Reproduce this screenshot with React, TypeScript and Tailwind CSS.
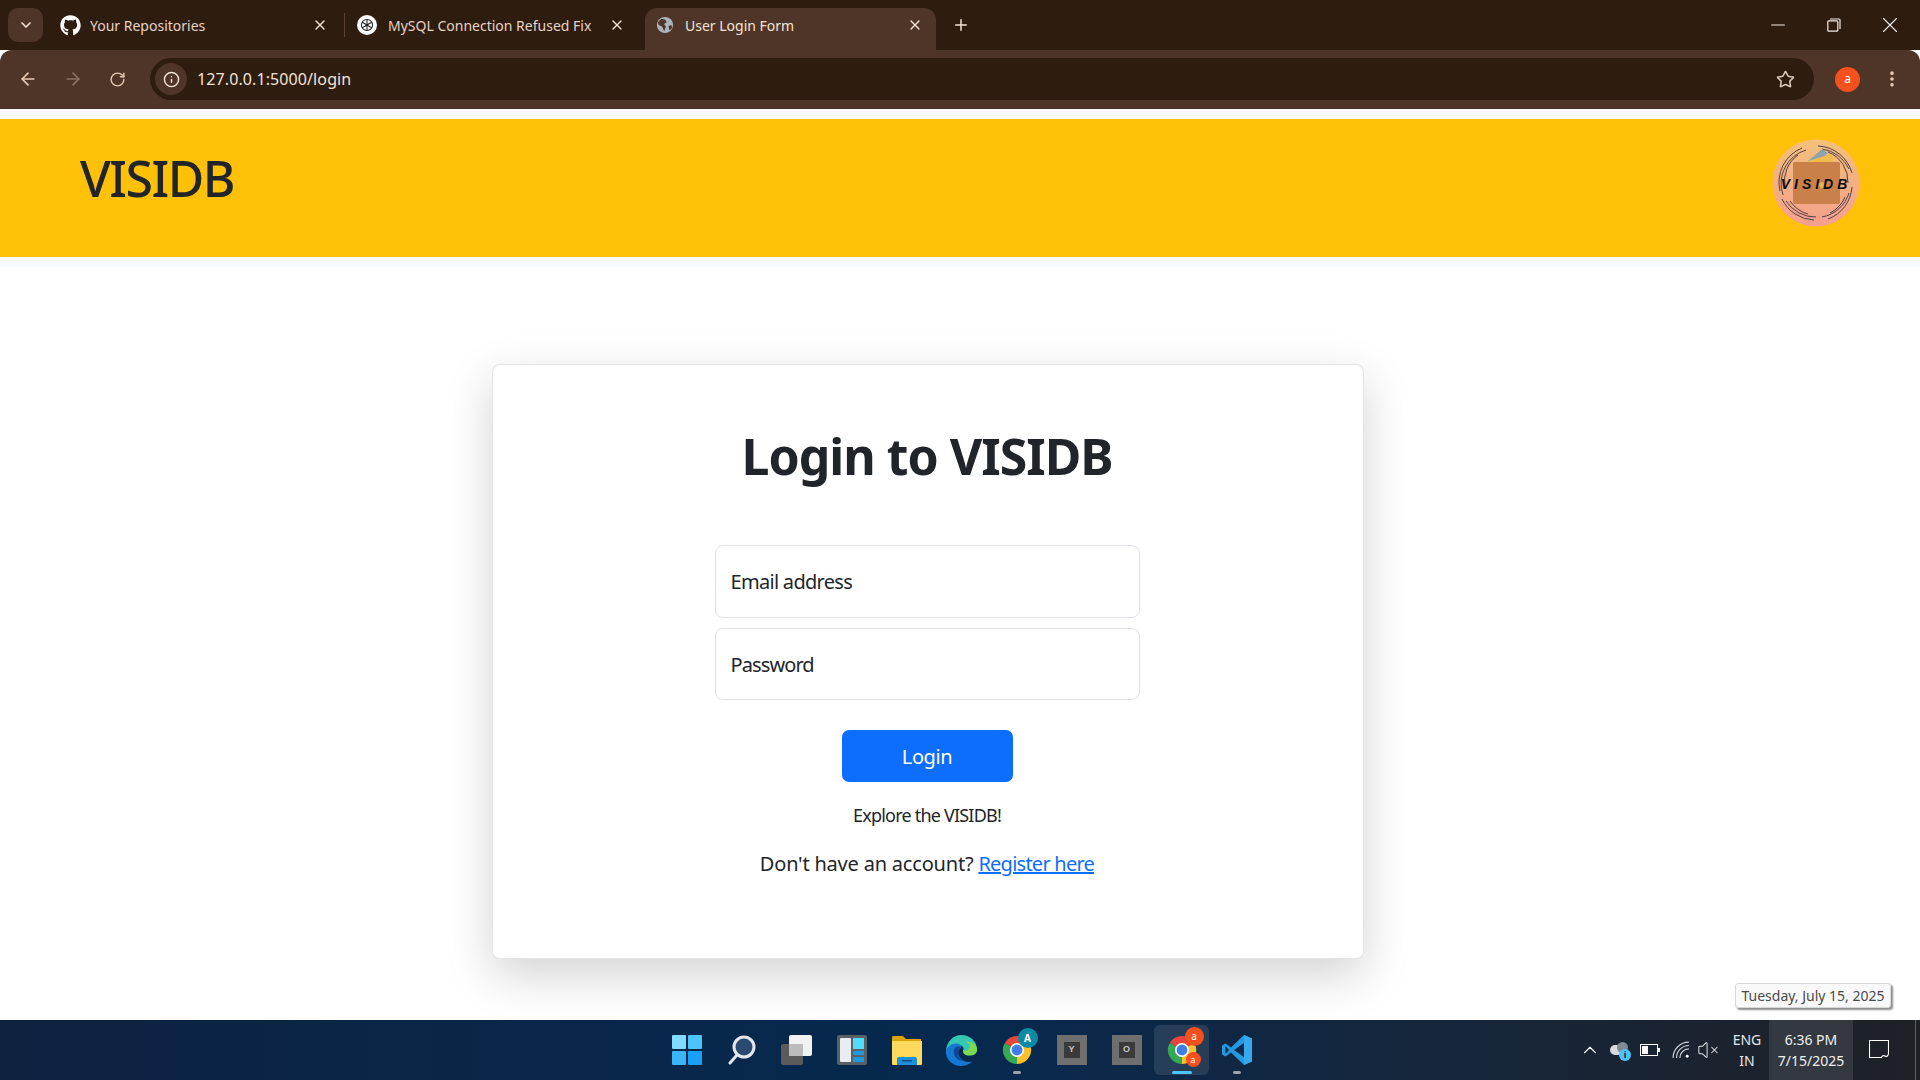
import { ChevronDown, X, ArrowLeft, ArrowRight, RotateCw, Info, Star, EllipsisVertical, Plus, Minus, ChevronUp, VolumeX } from 'lucide-react';
import { FaGithub } from 'react-icons/fa';
import type { ReactNode } from 'react';

const SEGOE = "font-['Noto_Sans',sans-serif]";

function ChromeIcon() {
  return (
    <svg viewBox="0 0 32 32" className="w-[30px] h-[30px]">
      <path d="M16 16L3 8.5A15 15 0 0 1 29 8.5Z" fill="#e8453c" />
      <path d="M16 16L29 8.5A15 15 0 0 1 16 31Z" fill="#fbc02d" />
      <path d="M16 16L16 31A15 15 0 0 1 3 8.5Z" fill="#34a853" />
      <circle cx="16" cy="16" r="7.5" fill="#fff" />
      <circle cx="16" cy="16" r="5.8" fill="#3f7ee8" />
    </svg>
  );
}

function TaskItem({ children, dot, active }: { children: ReactNode; dot?: boolean; active?: boolean }) {
  return (
    <div className={`relative w-[55px] h-[50px] flex items-center justify-center rounded-md ${active ? 'bg-white/10' : ''}`}>
      {children}
      {dot && <span className="absolute bottom-[1px] w-[8px] h-[3px] rounded-full bg-[#9aa3ad]" />}
      {active && <span className="absolute bottom-[1px] w-[20px] h-[3px] rounded-full bg-[#4cc2ff]" />}
    </div>
  );
}

function AppBox({ letter }: { letter: string }) {
  return (
    <div className="w-[30px] h-[30px] bg-[#6f6f6f] flex items-center justify-center">
      <div className="w-[16px] h-[16px] bg-[#3a3a3a] flex items-center justify-center text-[9px] font-bold text-[#c8c8c8] font-['Liberation_Sans',sans-serif]">
        {letter}
      </div>
    </div>
  );
}

function Logo() {
  return (
    <svg viewBox="0 0 88 88" className="w-[88px] h-[88px]">
      <defs>
        <linearGradient id="logoBg" x1="0" y1="0" x2="0" y2="1">
          <stop offset="0" stopColor="#f3c07a" />
          <stop offset="1" stopColor="#f59f8d" />
        </linearGradient>
      </defs>
      <circle cx="44" cy="44" r="43.5" fill="url(#logoBg)" />
      <g fill="none" stroke="#4e4045" strokeWidth="1">
        <path d="M8 52A37 37 0 0 1 30 9" />
        <path d="M11 56A35 35 0 0 1 34 11" />
        <path d="M13 48A32 32 0 0 1 26 16" />
        <path d="M46 7A37 37 0 0 1 80 34" />
        <path d="M50 10A35 35 0 0 1 77 30" />
        <path d="M56 13A32 32 0 0 1 76 44" />
        <path d="M80 48A37 37 0 0 1 56 80" />
        <path d="M77 54A35 35 0 0 1 50 78" />
        <path d="M73 58A32 32 0 0 1 58 74" />
        <path d="M10 60A37 37 0 0 0 42 81" />
        <path d="M14 62A35 35 0 0 0 44 78" />
        <path d="M18 62A32 32 0 0 0 36 75" />
      </g>
      <path d="M36 22L50 10L56 14L46 24Z" fill="#8fa3ad" />
      <path d="M27 25L59 15L62 22L34 27Z" fill="#f2bc4a" />
      <rect x="21" y="23" width="47" height="42" rx="2" fill="#c98149" />
      <circle cx="50" cy="46" r="3" fill="#eeb04a" />
      <text x="44" y="50" textAnchor="middle" fontSize="14" fontWeight="700" fontStyle="italic" letterSpacing="4" fill="#0b0b0b" fontFamily="Liberation Sans, sans-serif">
        VISIDB
      </text>
    </svg>
  );
}

export default function App() {
  return (
    <div className={`w-[1920px] h-[1080px] overflow-hidden flex flex-col bg-white relative ${SEGOE}`}>
      {/* tab strip */}
      <div className="h-[50px] bg-[#2e1c0f] flex items-start pt-[8px] text-[14px] text-[#e7d3c4] shrink-0">
        <div className="ml-[8px] w-[35px] h-[34px] rounded-[10px] bg-[#4f3527] flex items-center justify-center">
          <ChevronDown className="w-4 h-4 text-[#f3e3d6]" strokeWidth={2.5} />
        </div>
        <div className="ml-[17px] w-[284px] h-[34px] flex items-center">
          <FaGithub className="w-[21px] h-[21px] text-white shrink-0" />
          <span className="ml-[9px] flex-1">Your Repositories</span>
          <X className="w-4 h-4 mr-[16px] text-[#f3e3d6]" />
        </div>
        <div className="w-px h-[24px] mt-[5px] bg-[#5b4334]" />
        <div className="ml-[12px] w-[288px] h-[34px] flex items-center">
          <span className="w-[20px] h-[20px] rounded-full bg-white flex items-center justify-center shrink-0">
            <svg viewBox="0 0 20 20" className="w-[16px] h-[16px]" fill="none" stroke="#222" strokeWidth="1.3">
              <circle cx="10" cy="10" r="7" />
              <path d="M10 3v9M4 6.5l8 4.5M4 13.5l8-4.5M10 17V8M16 13.5L8 9M16 6.5L8 11" />
            </svg>
          </span>
          <span className="ml-[11px] flex-1 whitespace-nowrap">MySQL Connection Refused Fix</span>
          <X className="w-4 h-4 mr-[20px] text-[#f3e3d6]" />
        </div>
        <div className="w-[291px] h-[42px] bg-[#4f3527] rounded-t-[12px] flex items-start pt-[7px] pl-[11px] text-[#f3e3d6]">
          <svg viewBox="0 0 20 20" className="w-[18px] h-[18px] mt-[1px] shrink-0">
            <circle cx="10" cy="10" r="9" fill="#aab4bd" />
            <path d="M6 3l4 1 2 3-3 2 2 3-2 5-2-5-4-2-1-3zM14 11l3-1 1 3-3 3z" fill="#4f3527" />
          </svg>
          <span className="ml-[11px] flex-1">User Login Form</span>
          <X className="w-4 h-4 mr-[13px] mt-[2px]" />
        </div>
        <Plus className="ml-[16px] mt-[8px] w-[18px] h-[18px] text-[#f3e3d6]" />
        <div className="ml-auto mr-[2px] flex items-center h-[34px] text-[#f2ece7]">
          <div className="w-[56px] flex justify-center">
            <Minus className="w-[22px] h-[22px]" strokeWidth={1.1} />
          </div>
          <div className="w-[56px] flex justify-center">
            <svg viewBox="0 0 14 14" className="w-[14px] h-[14px]" fill="none" stroke="currentColor" strokeWidth="1.2">
              <rect x="0.8" y="2.8" width="10" height="10.4" rx="1" />
              <path d="M3 1h9a1 1 0 0 1 1 1v9" />
            </svg>
          </div>
          <div className="w-[56px] flex justify-center">
            <X className="w-[26px] h-[26px]" strokeWidth={1} />
          </div>
        </div>
      </div>

      {/* toolbar */}
      <div className="h-[59px] bg-[#4f3527] rounded-t-[12px] flex items-center shrink-0 border-b border-[#463025]">
        <ArrowLeft className="ml-[18px] w-[20px] h-[20px] text-[#e7c8b2]" strokeWidth={2} />
        <ArrowRight className="ml-[25px] w-[20px] h-[20px] text-[#8b7263]" strokeWidth={2} />
        <RotateCw className="ml-[26px] w-[17px] h-[17px] text-[#e7c8b2]" strokeWidth={2} />
        <div className="ml-[24px] w-[1664px] h-[42px] rounded-full bg-[#2e1c0f] flex items-center">
          <div className="ml-[5px] w-[32px] h-[32px] rounded-full bg-[#4f3527] flex items-center justify-center">
            <Info className="w-[17px] h-[17px] text-[#f3e3d6]" />
          </div>
          <span className="ml-[10px] text-[16px] text-[#f3e3d6] tracking-[0.1px]">127.0.0.1:5000/login</span>
          <Star className="ml-auto mr-[19px] w-[19px] h-[19px] text-[#d8c8bc]" strokeWidth={2} />
        </div>
        <div className="ml-[21px] w-[25px] h-[25px] rounded-full bg-[#f4511e] flex items-center justify-center text-[12px] text-white">a</div>
        <EllipsisVertical className="ml-[22px] w-[20px] h-[20px] text-[#e7c8b2]" strokeWidth={2.4} />
      </div>

      {/* page header */}
      <div className="bg-[#f8f9fa] py-[10px] shrink-0">
        <div className="h-[138px] bg-[#ffc107] flex items-start justify-between pl-[80px] pr-[60px]">
          <h2 className="mt-[24px] text-[50px] leading-[70px] font-medium text-[#212529] tracking-[-1.5px]">VISIDB</h2>
          <div className="mt-[20px]">
            <Logo />
          </div>
        </div>
      </div>

      {/* login card */}
      <div className="flex-1 pt-[97px] pl-[492px]">
        <div className="w-[872px] h-[595px] pr-[2px] bg-white border border-black/10 rounded-[8px] shadow-[0_16px_48px_rgba(0,0,0,0.175)] flex flex-col items-center">
          <h1 className="mt-[53px] text-[50px] leading-[76px] font-bold text-[#212529] tracking-[-1px]">Login to VISIDB</h1>
          <input
            placeholder="Email address"
            className="mt-[51px] w-[425px] h-[73px] px-[15px] text-[20px] tracking-[-0.7px] border border-[#dee2e6] rounded-[8px] placeholder:text-[#212529]"
          />
          <input
            placeholder="Password"
            className="mt-[10px] w-[425px] h-[72px] px-[15px] text-[20px] tracking-[-0.9px] border border-[#dee2e6] rounded-[8px] placeholder:text-[#212529]"
          />
          <button className="mt-[30px] w-[171px] h-[52px] pt-[1px] rounded-[7px] bg-[#0d6efd] text-white text-[20px] tracking-[-0.4px]">Login</button>
          <p className="mt-[21px] text-[18px] leading-[24px] text-[#212529] tracking-[-0.8px]">Explore the VISIDB!</p>
          <p className="mt-[23px] text-[20px] leading-[28px] text-[#212529] tracking-[-0.2px]">
            Don't have an account? <a href="#" className="text-[#0d6efd] underline tracking-[-0.75px]">Register here</a>
          </p>
        </div>
      </div>

      {/* date tooltip */}
      <div className="absolute left-[1735px] top-[983px] w-[156px] h-[25px] bg-[#f9f9f9] border border-[#d8d8d8] rounded-[3px] shadow-[2px_2px_2px_rgba(0,0,0,0.45)] flex items-center justify-center text-[14px] text-[#4a4a4a]">
        Tuesday, July 15, 2025
      </div>

      {/* taskbar */}
      <div className="h-[60px] shrink-0 flex items-center pl-[659px] bg-linear-to-r from-[#0d2340] via-[#06294f] to-[#1e2126] text-white relative">
        <TaskItem>
          <svg viewBox="0 0 30 30" className="w-[30px] h-[30px]">
            <rect x="0" y="0" width="14" height="14" rx="1" fill="#7fdcff" />
            <rect x="16" y="0" width="14" height="14" rx="1" fill="#4cc4fb" />
            <rect x="0" y="16" width="14" height="14" rx="1" fill="#38b6f9" />
            <rect x="16" y="16" width="14" height="14" rx="1" fill="#18a0f4" />
          </svg>
        </TaskItem>
        <TaskItem>
          <svg viewBox="0 0 28 30" className="w-[28px] h-[30px]" fill="none">
            <circle cx="16" cy="12" r="10" stroke="#e4e8ec" strokeWidth="3" fill="#2a4a70" />
            <path d="M9 20L2 28" stroke="#e4e8ec" strokeWidth="3" strokeLinecap="round" />
          </svg>
        </TaskItem>
        <TaskItem>
          <svg viewBox="0 0 32 30" className="w-[32px] h-[30px]">
            <rect x="0" y="9" width="22" height="21" rx="2" fill="#5a5a5a" />
            <rect x="8" y="0" width="23" height="21" rx="2" fill="#f2f2f2" />
            <rect x="8" y="9" width="14" height="12" rx="1" fill="#bcbcbc" />
          </svg>
        </TaskItem>
        <TaskItem>
          <svg viewBox="0 0 30 30" className="w-[30px] h-[30px]">
            <rect width="30" height="30" rx="2" fill="#5b5f66" />
            <rect x="3" y="3" width="11" height="24" rx="1" fill="#e9edf0" />
            <rect x="16" y="3" width="11" height="11" fill="#4fdcff" />
            <rect x="16" y="16" width="11" height="4" fill="#1b9be0" />
            <rect x="16" y="22" width="11" height="5" fill="#1b9be0" />
          </svg>
        </TaskItem>
        <TaskItem>
          <svg viewBox="0 0 30 30" className="w-[30px] h-[30px]">
            <path d="M0 2a1 1 0 0 1 1-1h10l3 3h15v8H0Z" fill="#d9a40a" />
            <path d="M0 6h30v23a1 1 0 0 1-1 1H1a1 1 0 0 1-1-1Z" fill="#ffd95c" />
            <path d="M5 30v-6a2 2 0 0 1 2-2h16a2 2 0 0 1 2 2v6Z" fill="#1c8fd8" />
            <rect x="10" y="25" width="10" height="1.5" fill="#0b4f86" />
          </svg>
        </TaskItem>
        <TaskItem>
          <svg viewBox="0 0 32 32" className="w-[31px] h-[31px]">
            <path d="M16 0C25 0 32 7 32 15C32 19 29 21 25 21C20 21 17 19 18 15C19 12 14 9 9 10C5 11 2 13 0 16C1 7 7 0 16 0Z" fill="#36c7b4" />
            <path d="M32 15C32 8 24 5 18 8C24 6 26 11 24 14C22 17 19 17 18 15C16 20 22 22 26 21C29 21 32 19 32 15Z" fill="#7bdc4f" />
            <path d="M0 16C2 11 7 8 12 9C17 10 16 13 14 15C11 18 13 24 19 27C22 28 25 28 27 27C24 30 20 32 16 32C7 32 -1 25 0 16Z" fill="#1478d4" />
            <path d="M14 15C11 18 12 25 19 27C13 27 8 23 8 17C8 13 11 11 14 12C16 12.500 15 14 14 15Z" fill="#0c4a94" />
          </svg>
        </TaskItem>
        <TaskItem dot>
          <div className="relative">
            <ChromeIcon />
            <span className="absolute -top-[7px] -right-[6px] w-[20px] h-[20px] rounded-full bg-[#0b8ba3] flex items-center justify-center text-[10px] text-white font-bold">A</span>
          </div>
        </TaskItem>
        <TaskItem><AppBox letter="Y" /></TaskItem>
        <TaskItem><AppBox letter="O" /></TaskItem>
        <TaskItem active>
          <div className="relative">
            <ChromeIcon />
            <span className="absolute -top-[8px] -right-[7px] w-[19px] h-[19px] rounded-full bg-[#f4511e] flex items-center justify-center text-[10px] text-white">a</span>
            <span className="absolute bottom-[-2px] right-[-4px] w-[15px] h-[15px] rounded-full bg-[#f4511e] flex items-center justify-center text-[9px] text-white">a</span>
          </div>
        </TaskItem>
        <TaskItem dot>
          <svg viewBox="0 0 30 30" className="w-[30px] h-[30px]">
            <path d="M22 0L9 12.500L3.500 8.500L0 10.500V19.500L3.500 21.500L9 17.500L22 30L30 26.500V3.500Z" fill="#2499df" />
            <path d="M22 8L12 15L22 22Z" fill="#0b2a4d" />
            <path d="M22 0L30 3.500V26.500L22 30Z" fill="#39a9ee" />
            <path d="M3.500 11L7 15L3.500 19Z" fill="#0b2a4d" />
          </svg>
        </TaskItem>

        {/* tray */}
        <div className="ml-[315px] h-full flex items-center">
          <ChevronUp className="w-[22px] h-[22px]" strokeWidth={1.2} />
          <div className="relative ml-[9px] w-[20px] h-[16px]">
            <span className="absolute left-0 top-[3px] w-[13px] h-[10px] rounded-full bg-[#d7dbe0]" />
            <span className="absolute left-[7px] top-0 w-[11px] h-[11px] rounded-full bg-[#7f8a96]" />
            <span className="absolute right-[-1px] bottom-[-3px] w-[12px] h-[12px] rounded-full bg-[#4cc2ff] text-[9px] leading-[12px] text-center font-bold text-[#10233a]">i</span>
          </div>
          <svg viewBox="0 0 20 12" className="ml-[10px] w-[20px] h-[12px]" fill="none" stroke="#fff" strokeWidth="1">
            <rect x="0.500" y="0.500" width="17" height="11" />
            <rect x="2" y="2" width="6" height="8" fill="#fff" stroke="none" />
            <rect x="18" y="4" width="2" height="4" fill="#fff" stroke="none" />
          </svg>
          <svg viewBox="0 0 16 16" className="ml-[12px] w-[18px] h-[18px]" fill="none" stroke="#cfd3d8" strokeWidth="1">
            <path d="M1 15A14 14 0 0 1 15 1M4 15A11 11 0 0 1 15 4M7 15A8 8 0 0 1 15 7" />
            <circle cx="13.500" cy="13.500" r="1.300" fill="#fff" stroke="none" />
          </svg>
          <VolumeX className="ml-[7px] w-[22px] h-[22px] text-[#e4e6e8]" strokeWidth={1.1} />
          <div className="ml-[7px] w-[42px] flex flex-col items-center text-[14px] leading-[21px] text-[#e4e6e8]">
            <span>ENG</span>
            <span>IN</span>
          </div>
          <div className="ml-[1px] w-[84px] h-full bg-white/10 flex flex-col items-center justify-center text-[14px] leading-[21px] text-[#f0f0f0]">
            <span>6:36 PM</span>
            <span>7/15/2025</span>
          </div>
          <svg viewBox="0 0 20 20" className="ml-[16px] w-[20px] h-[20px]" fill="none" stroke="#fff" strokeWidth="1.1">
            <path d="M0.500 0.500H19.500V13C19.500 16 17.500 17 16 16C14.500 15 13 16 12.500 17.500H0.500Z" />
          </svg>
        </div>
        <div className="absolute right-[4px] top-0 w-px h-full bg-white/30" />
      </div>
    </div>
  );
}
